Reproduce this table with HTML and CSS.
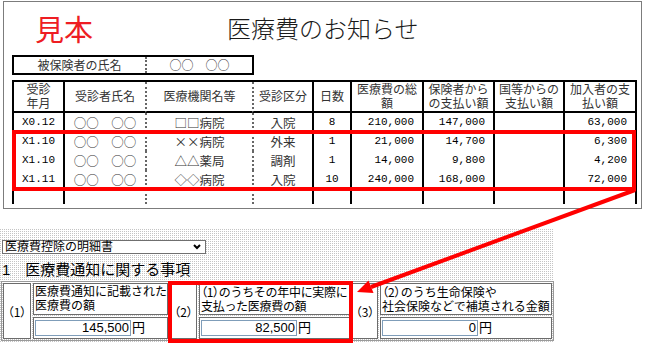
FILE: index.html
```html
<!DOCTYPE html>
<html lang="ja">
<head>
<meta charset="utf-8">
<title>医療費のお知らせ</title>
<link rel="stylesheet" href="styles.css">
</head>
<body>
<div class="doc">
  <div class="head">
    <span class="mihon">見本</span>
    <h1 class="title">医療費のお知らせ</h1>
  </div>
  <div class="name-table">
    <div class="nc nc-label">被保険者の氏名</div>
    <div class="nc">○○　○○</div>
  </div>
  <div class="main-table">
    <div class="th">受診<br>年月</div>
    <div class="th th1">受診者氏名</div>
    <div class="th th1">医療機関名等</div>
    <div class="th th1">受診区分</div>
    <div class="th th1">日数</div>
    <div class="th">医療費の総<br>額</div>
    <div class="th">保険者から<br>の支払い額</div>
    <div class="th">国等からの<br>支払い額</div>
    <div class="th">加入者の支<br>払い額</div>

    <div class="td mono">X0.12</div>
    <div class="td">○○　○○</div>
    <div class="td">□□病院</div>
    <div class="td">入院</div>
    <div class="td mono">8</div>
    <div class="td mono num">210,000</div>
    <div class="td mono num">147,000</div>
    <div class="td"></div>
    <div class="td mono num">63,000</div>

    <div class="td mono">X1.10</div>
    <div class="td">○○　○○</div>
    <div class="td">××病院</div>
    <div class="td">外来</div>
    <div class="td mono">1</div>
    <div class="td mono num">21,000</div>
    <div class="td mono num">14,700</div>
    <div class="td"></div>
    <div class="td mono num">6,300</div>

    <div class="td mono">X1.10</div>
    <div class="td">○○　○○</div>
    <div class="td">△△薬局</div>
    <div class="td">調剤</div>
    <div class="td mono">1</div>
    <div class="td mono num">14,000</div>
    <div class="td mono num">9,800</div>
    <div class="td"></div>
    <div class="td mono num">4,200</div>

    <div class="td mono">X1.11</div>
    <div class="td">○○　○○</div>
    <div class="td">◇◇病院</div>
    <div class="td">入院</div>
    <div class="td mono">10</div>
    <div class="td mono num">240,000</div>
    <div class="td mono num">168,000</div>
    <div class="td"></div>
    <div class="td mono num">72,000</div>

    <div class="td blank"></div>
    <div class="td blank"></div>
    <div class="td blank"></div>
    <div class="td blank"></div>
    <div class="td blank"></div>
    <div class="td blank"></div>
    <div class="td blank"></div>
    <div class="td blank"></div>
    <div class="td blank"></div>
  </div>
</div>

<div class="form">
  <div class="select">
    <span>医療費控除の明細書</span>
    <svg class="chev" width="8" height="6" viewBox="0 0 8 6"><polyline points="1,1 4,4 7,1" fill="none" stroke="#000" stroke-width="2"/></svg>
  </div>
  <h2 class="sec-title">1　医療費通知に関する事項</h2>
  <div class="group">
    <div class="sec">
      <div class="numcell s1n"><span class="palt">（1）</span></div>
      <div class="col s1c">
        <div class="label">医療費通知に記載された<br>医療費の額</div>
        <div class="value"><span class="input">145,500</span><span class="yen">円</span></div>
      </div>
    </div>
    <div class="sec">
      <div class="numcell s2n"><span class="palt">（2）</span></div>
      <div class="col s2c">
        <div class="label tight"><span class="palt">（1）</span>のうちその年中に実際に<br>支払った医療費の額</div>
        <div class="value"><span class="input">82,500</span><span class="yen">円</span></div>
      </div>
    </div>
    <div class="sec">
      <div class="numcell s3n"><span class="palt">（3）</span></div>
      <div class="col s3c">
        <div class="label"><span class="palt">（2）</span>のうち生命保険や<br>社会保険などで補填される金額</div>
        <div class="value"><span class="input">0</span><span class="yen">円</span></div>
      </div>
    </div>
  </div>
</div>

<svg class="overlay" width="648" height="359" viewBox="0 0 648 359">
  <rect x="14" y="132" width="620" height="57" fill="none" stroke="#ff0000" stroke-width="4"/>
  <rect x="170" y="283" width="181" height="58" fill="none" stroke="#ff0000" stroke-width="4"/>
  <line x1="635" y1="190" x2="371" y2="287" stroke="#ff0000" stroke-width="4"/>
  <polygon points="357,292 373.5,293 368.5,280.5" fill="#ff0000"/>
</svg>
</body>
</html>
```

FILE: styles.css
```css
* { box-sizing: border-box; }

body {
  margin: 0;
  width: 648px;
  height: 359px;
  overflow: hidden;
  position: relative;
  background: #fff;
  color: #111;
  font-family: "Liberation Sans", "Noto Sans CJK JP", sans-serif;
}

.doc {
  margin: 1px 0 0 3px;
  width: 639px;
  height: 208px;
  border: 1px solid #7c7c7c;
  padding-left: 8px;
}

.head {
  height: 53px;
  display: flex;
  align-items: flex-start;
}

.mihon {
  margin: 12px 0 0 23px;
  color: #ee1d23;
  font-family: "Noto Sans CJK JP", sans-serif;
  font-size: 29px;
  line-height: 1;
  font-weight: 400;
}

.title {
  margin: 14px 0 0 134px;
  font-family: "Noto Sans CJK JP", sans-serif;
  font-size: 24px;
  line-height: 1;
  font-weight: 300;
  color: #1a1a1a;
}

.name-table {
  display: grid;
  grid-template-columns: 133px 105px;
  width: 242px;
  height: 20px;
  border: 2px solid #000;
}

.nc {
  font-family: "Noto Sans CJK JP", sans-serif;
  font-size: 12px;
  line-height: 16px;
  text-align: center;
  color: #333;
}

.nc-label { border-right: 2px dotted #666; }

.main-table {
  margin-top: 5px;
  display: grid;
  grid-template-columns: 49px 82px 107px 60px 38px 72px 71px 70px 72px;
  grid-template-rows: 31px 19px 19px 19px 19px 15px;
  width: 625px;
  border: 2px solid #000;
  border-bottom: none;
}

.th, .td {
  border-left: 2px solid #000;
  text-align: center;
  color: #333;
}

.main-table > :nth-child(9n+1) { border-left: none; }
.main-table > :nth-child(9n+3),
.main-table > :nth-child(9n+4) { border-left: 2px dotted #666; }

.th {
  border-bottom: 2px solid #000;
  font-size: 12px;
  line-height: 14px;
  padding-top: 1px;
}

.th1 { padding-top: 8px; }

.td {
  font-family: "Noto Sans CJK JP", sans-serif;
  font-size: 12.5px;
  line-height: 19px;
  white-space: nowrap;
}

.td.mono {
  font-family: "Liberation Mono", monospace;
  font-size: 11px;
  color: #000;
}

.num {
  text-align: right;
  padding-right: 8px;
}

.form {
  margin-top: 20px;
  width: 554px;
  height: 113px;
  padding-top: 11px;
  background-color: #c4c4c4;
  background-image:
    linear-gradient(90deg, transparent 1px, #fff 1px),
    linear-gradient(transparent 1px, #fff 1px);
  background-size: 2px 2px;
  color: #000;
}

.select {
  margin-left: 2px;
  width: 204px;
  height: 14px;
  border: 1px solid #6f6f6f;
  background: #fff;
  display: flex;
  align-items: center;
  justify-content: space-between;
  padding: 0 4px 0 2px;
  font-size: 12px;
  line-height: 12px;
}

.chev { display: block; }

.sec-title {
  margin: 5px 0 0 2px;
  height: 22px;
  font-size: 15px;
  line-height: 22px;
  font-weight: 400;
}

.group {
  margin-left: 1px;
  width: 553px;
  height: 60px;
  border: 1px solid #9a9a9a;
  padding: 1px;
  display: flex;
  gap: 2px;
}

.sec {
  display: flex;
  gap: 2px;
}

.numcell {
  border: 1px solid #6c6c6c;
  display: flex;
  align-items: center;
  justify-content: center;
  font-size: 12px;
  background: #fff;
}

.s1n { width: 28px; }
.s2n { width: 27px; }
.s3n { width: 26px; }
.s1c { width: 135px; }
.s2c { width: 151px; }
.s3c { width: 172px; }

.palt { font-family: "Noto Sans CJK JP", sans-serif; font-feature-settings: "palt"; }

.col {
  display: flex;
  flex-direction: column;
  gap: 2px;
}

.label {
  height: 32px;
  border: 1px solid #6c6c6c;
  background: #fff;
  padding: 1px 0 0 1px;
  font-size: 12px;
  line-height: 14px;
  white-space: nowrap;
}

.tight { letter-spacing: -0.3px; }

.value {
  height: 22px;
  border: 1px solid #6c6c6c;
  background: #fff;
  display: flex;
  align-items: center;
  padding-left: 1px;
}

.input {
  width: 96px;
  height: 16px;
  border: 1px solid #7f9db9;
  background: #fff;
  text-align: right;
  padding-right: 1px;
  font-size: 13px;
  line-height: 14px;
}

.yen {
  margin-left: 1px;
  font-size: 13px;
  line-height: 14px;
}

.overlay {
  position: absolute;
  left: 0;
  top: 0;
  pointer-events: none;
}
```
